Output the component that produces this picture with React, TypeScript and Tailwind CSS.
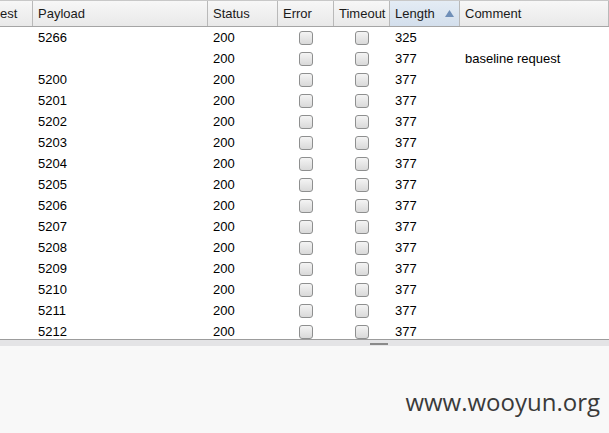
import React from "react";

type Row = { id: number; payload: string; status: string; length: string; comment: string };

const rows: Row[] = [
  { id: 1, payload: "5266", status: "200", length: "325", comment: "" },
  { id: 0, payload: "", status: "200", length: "377", comment: "baseline request" },
  ...["5200", "5201", "5202", "5203", "5204", "5205", "5206", "5207", "5208", "5209", "5210", "5211", "5212"].map(
    (p, i) => ({ id: i + 2, payload: p, status: "200", length: "377", comment: "" })
  ),
];

const cols = [
  { key: "req", title: "est", w: "w-[33px]", pad: "pl-0" },
  { key: "payload", title: "Payload", w: "w-[175px]", pad: "pl-[5px]" },
  { key: "status", title: "Status", w: "w-[70px]", pad: "pl-[5px]" },
  { key: "error", title: "Error", w: "w-[56px]", pad: "pl-[5px]" },
  { key: "timeout", title: "Timeout", w: "w-[56px]", pad: "pl-[5px]" },
  { key: "length", title: "Length", w: "w-[70px]", pad: "pl-[5px]" },
  { key: "comment", title: "Comment", w: "flex-1", pad: "pl-[5px]" },
];

function Check() {
  return (
    <div className="h-[14px] w-[14px] rounded-[3px] border border-[#8e8f8f] bg-gradient-to-b from-[#f4f4f4] to-[#d9d9d9]" />
  );
}

export default function App() {
  return (
    <div
      className="flex h-[433px] w-[609px] flex-col overflow-hidden bg-white text-black"
      style={{ fontFamily: '"Liberation Sans", Arial, sans-serif' }}
    >
      <div className="h-[339px] overflow-hidden">
        <div className="flex h-[27px] border-y border-t-[#c8c8c8] border-b-[#a5a5a5] text-[13px] text-[#1a1a1a]">
          {cols.map((c) => (
            <div
              key={c.key}
              className={`${c.w} ${c.pad} flex items-center border-r border-[#b9b9b9] ${
                c.key === "length"
                  ? "bg-gradient-to-b from-[#e4ecf5] to-[#d3dfec]"
                  : "bg-gradient-to-b from-[#f7f7f7] to-[#e9e9e9]"
              }`}
            >
              <span>{c.title}</span>
              {c.key === "length" && (
                <svg width="9" height="7" viewBox="0 0 9 7" className="ml-auto mr-[5px]">
                  <path d="M4.5 0 L9 7 L0 7 Z" fill="#6f8fb8" />
                </svg>
              )}
            </div>
          ))}
        </div>
        {rows.map((r) => (
          <div key={r.id} className="flex h-[21px] items-center text-[13px]">
            <div className="w-[33px]" />
            <div className="w-[175px] pl-[5px]">{r.payload}</div>
            <div className="w-[70px] pl-[5px]">{r.status}</div>
            <div className="flex w-[56px] justify-center">
              <Check />
            </div>
            <div className="flex w-[56px] justify-center">
              <Check />
            </div>
            <div className="w-[70px] pl-[5px]">{r.length}</div>
            <div className="flex-1 pl-[5px]">{r.comment}</div>
          </div>
        ))}
      </div>
      <div className="h-[7px] border-t border-[#9c9c9c] bg-[#e4e4e6] pl-[370px]">
        <div className="mt-[3px] h-[2px] w-[18px] bg-[#8a8a8a]" />
      </div>
      <div className="flex flex-1 items-end justify-end bg-[#f8f8f8] pb-[13px] pr-[9px]">
        <span
          className="text-[24px] text-[#3a3a3a]"
          style={{ fontFamily: '"Open Sans", "Noto Sans", sans-serif' }}
        >
          www.wooyun.org
        </span>
      </div>
    </div>
  );
}
